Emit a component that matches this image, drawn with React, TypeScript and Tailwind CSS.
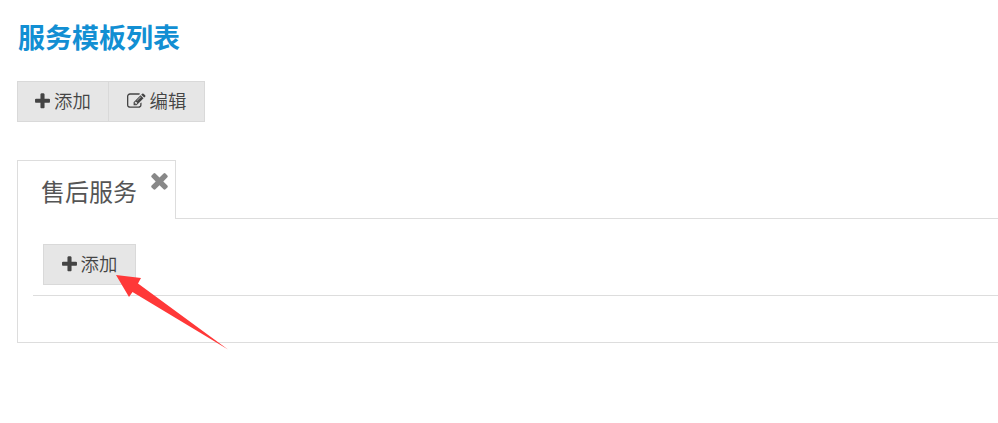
import type { ReactNode } from "react";

const icons = {
  plus: "M1600 736v192q0 40-28 68t-68 28h-416v416q0 40-28 68t-68 28h-192q-40 0-68-28t-28-68v-416h-416q-40 0-68-28t-28-68v-192q0-40 28-68t68-28h416v-416q0-40 28-68t68-28h192q40 0 68 28t28 68v416h416q40 0 68 28t28 68z",
  edit: "M888 1184l116-116-152-152-116 116v56h96v96h56zm440-720q-16-16-33 1l-350 350q-17 17-1 33t33-1l350-350q17-17 1-33zm80 594v190q0 119-84.5 203.5t-203.5 84.5h-832q-119 0-203.5-84.5t-84.5-203.5v-832q0-119 84.5-203.5t203.5-84.5h832q63 0 117 25 15 7 18 23 3 17-9 29l-49 49q-14 14-32 8-23-6-45-6h-832q-66 0-113 47t-47 113v832q0 66 47 113t113 47h832q66 0 113-47t47-113v-126q0-13 9-22l64-64q15-15 35-7t20 29zm-96-738l288 288-672 672h-288v-288zm444 132l-92 92-288-288 92-92q28-28 68-28t68 28l152 152q28 28 28 68t-28 68z",
  times: "M1490 1322q0 40-28 68l-136 136q-28 28-68 28t-68-28l-294-294-294 294q-28 28-68 28t-68-28l-136-136q-28-28-28-68t28-68l294-294-294-294q-28-28-28-68t28-68l136-136q28-28 68-28t68 28l294 294 294-294q28-28 68-28t68 28l136 136q28 28 28 68t-28 68l-294 294 294 294q28 28 28 68z",
};

interface IconProps {
  name: keyof typeof icons;
  className?: string;
}

function Icon({ name, className }: IconProps) {
  return (
    <svg viewBox="0 0 1792 1792" fill="currentColor" className={className}>
      <path d={icons[name]} />
    </svg>
  );
}

function Button({ className, children }: { className: string; children: ReactNode }) {
  return (
    <button
      className={`flex h-[41px] items-center border border-[#d9d9d9] bg-[#e6e6e6] text-[18.4px] leading-none font-[350] text-[#444] ${className}`}
    >
      {children}
    </button>
  );
}

export default function App() {
  return (
    <div className="relative h-[423px] w-full overflow-hidden bg-white pt-[17px] pl-[17px] font-['Noto_Sans_CJK_SC',sans-serif]">
      <h1 className="h-10 pl-px text-[27px] leading-10 font-bold text-[#128fd3]">服务模板列表</h1>

      {/* Toolbar */}
      <div className="mt-6 flex">
        <Button className="w-[92px] pl-[15px]">
          <Icon name="plus" className="mr-[2px] size-[19px]" />
          <span className="-mt-[2px]">添加</span>
        </Button>
        <Button className="-ml-px w-[97px] pl-[18px]">
          <Icon name="edit" className="mr-1 size-[18.5px]" />
          <span className="-mt-[2px]">编辑</span>
        </Button>
      </div>

      {/* Tabs */}
      <div className="mt-[38px] flex h-[59px]">
        <div className="flex w-[159px] justify-between border border-b-0 border-[#ddd] pl-[23px]">
          <span className="pt-[10px] text-2xl leading-10 text-[#555]">售后服务</span>
          <Icon name="times" className="mt-[7px] mr-[3px] size-[25px] text-[#888]" />
        </div>
        <div className="flex-1 border-b border-[#ddd]" />
      </div>

      {/* Tab content */}
      <div className="h-[124px] border-b border-l border-[#ddd] pt-[25px] pl-[15px]">
        <div className="h-[52px] border-b border-[#ddd] pl-[10px]">
          <Button className="w-[93px] pl-[15.5px]">
            <Icon name="plus" className="mr-[2px] size-[19px]" />
            <span className="-mt-[2px]">添加</span>
          </Button>
        </div>
      </div>

      {/* Pointer */}
      <svg viewBox="0 0 112 75" className="absolute top-[275px] left-[116px] h-[75px] w-[112px]">
        <path d="M0 0L25 3L22 8.500L112 74.500L16.500 17L13 22Z" fill="#ff3838" />
      </svg>
    </div>
  );
}
